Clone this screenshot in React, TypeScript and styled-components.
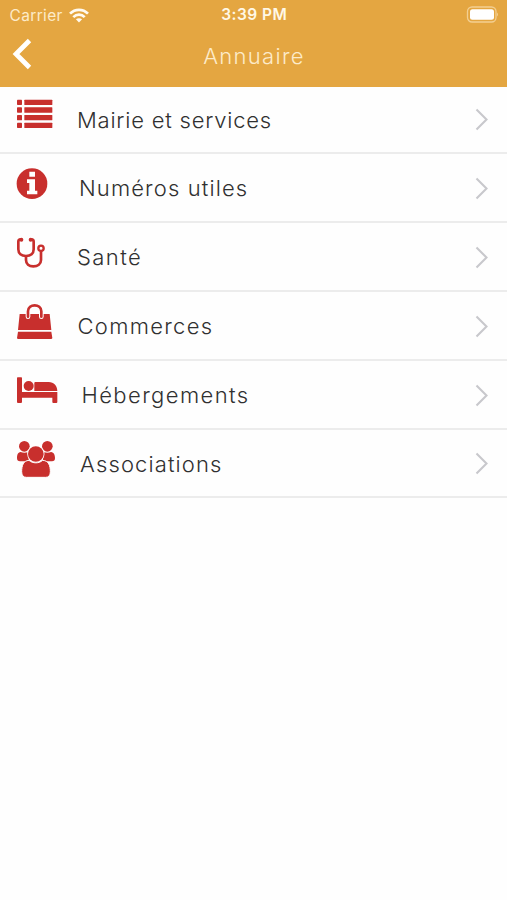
import React from "react";
import styled, { createGlobalStyle } from "styled-components";

const RED = "#c82f2d";

const GlobalStyle = createGlobalStyle`
  * { box-sizing: border-box; }
  body { margin: 0; background: #fff; font-family: Inter, "Open Sans", sans-serif; }
`;

const Screen = styled.main`
  width: 507px;
  height: 900px;
  overflow: hidden;
  background: #fefefe;
`;

const Header = styled.header`
  height: 87px;
  background: #e4a641;
  color: #fff8e6;
`;

const StatusBar = styled.div`
  display: grid;
  grid-template-columns: 1fr auto 1fr;
  align-items: center;
  height: 29px;
  padding: 0 8px 0 9.5px;
`;

const Carrier = styled.div`
  display: flex;
  align-items: center;
  gap: 6px;
  font-size: 15.5px;
  letter-spacing: 0.35px;
  line-height: 29px;
  color: #fdebc9;
`;

const Clock = styled.div`
  font-size: 15.5px;
  font-weight: 600;
  letter-spacing: 0.45px;
  line-height: 30px;
`;

const BatterySlot = styled.div`
  display: flex;
  justify-content: flex-end;
  height: 17px;
  margin-bottom: 1px;
`;

const NavBar = styled.nav`
  display: grid;
  grid-template-columns: 60px 1fr 60px;
  height: 58px;
`;

const BackButton = styled.button`
  display: block;
  height: 50px;
  padding: 0 0 0 12px;
  border: 0;
  background: none;
  text-align: left;
  svg { display: block; }
`;

const Title = styled.h1`
  margin: 0;
  text-align: center;
  font-size: 22px;
  font-weight: 300;
  letter-spacing: 1.3px;
  line-height: 55px;
  text-indent: 1px;
  color: #fdebc9;
`;

const List = styled.ul`
  margin: 0;
  padding: 0;
  list-style: none;
`;

const Row = styled.li<{ $height: number }>`
  display: flex;
  height: ${(p) => p.$height}px;
  padding-right: 18px;
  border-bottom: 2px solid #ececec;
  align-items: flex-end;
`;

const RowIcon = styled.svg`
  flex: none;
  align-self: flex-start;
  width: 60px;
  height: 66px;
`;

const Label = styled.span<{ $indent: number; $tracking: number; $line: number }>`
  flex: 1;
  margin-left: ${(p) => p.$indent}px;
  font-size: 22px;
  font-weight: 300;
  letter-spacing: ${(p) => p.$tracking}px;
  line-height: ${(p) => p.$line}px;
  color: #303030;
  white-space: nowrap;
`;

const Chevron = styled.svg`
  flex: none;
  width: 14px;
  height: 65px;
`;

const ListIcon = () => (
  <g fill={RED}>
    {[44, 67, 90, 113].map((y) => (
      <React.Fragment key={y}>
        <rect x="51" y={y} width="15" height="16" rx="2" />
        <rect x="73" y={y} width="84" height="16" rx="1.5" />
      </React.Fragment>
    ))}
  </g>
);

const InfoIcon = () => (
  <>
    <circle cx="96" cy="86" r="46" fill={RED} />
    <path fill="#fff" d="M88 50h17v15H88zM81 73h24v34h7v11H81v-11h7V84h-7z" />
  </>
);

const StethoscopeIcon = () => (
  <g fill="none" stroke={RED} strokeWidth="8" strokeLinecap="round" strokeLinejoin="round">
    <path d="M62 46Q55 46 55 53V76C55 88 64 96 78 96S101 88 101 76V53Q101 46 94 46" />
    <path d="M78 97V108C78 120 87 127 100 127S123 120 123 108V83" />
    <circle cx="123" cy="73" r="8" strokeWidth="7" />
    <path d="M64 47h.1M92 47h.1" strokeWidth="12" />
  </g>
);

const BagIcon = () => (
  <>
    <path fill={RED} d="M59 66H149L154 114H54ZM54 119H154L157 138Q157 141 153 141H55Q51 141 51 138Z" />
    <path d="M84 74V58C84 34 124 34 124 58V74" fill="none" stroke="#fff" strokeWidth="14" strokeLinecap="round" />
    <path d="M84 74V58C84 34 124 34 124 58V74" fill="none" stroke={RED} strokeWidth="8" strokeLinecap="round" />
  </>
);

const BedIcon = () => (
  <g fill={RED}>
    <path d="M53 49H64Q66 49 66 52V93H172V123Q172 126 169 126H160Q157 126 157 123V110H66V123Q66 126 63 126H54Q51 126 51 123V52Q51 49 53 49Z" />
    <circle cx="86" cy="75" r="15" />
    <path d="M106 63H146C162 64 171 73 172 90H103V66Q103 63 106 63Z" />
  </g>
);

const UsersIcon = () => (
  <g fill={RED}>
    <circle cx="73" cy="49" r="16" />
    <circle cx="142" cy="49" r="16" />
    <path d="M62 66C68 69 76 69 83 67L87 94H60Q51 94 51 84C51 76 53 67 62 66Z" />
    <path d="M153 66C147 69 139 69 132 67L128 94H156Q165 94 165 84C165 76 162 67 153 66Z" />
    <circle cx="107.5" cy="72" r="26" fill="#fff" />
    <path stroke="#fff" strokeWidth="3" d="M87 91C98 101 117 101 128 91C146 92 151 107 151 125Q151 142 137 142H79Q65 142 65 125C65 107 70 92 87 91Z" />
    <circle cx="107.5" cy="72" r="23.5" />
  </g>
);

const rows = [
  { label: "Mairie et services", height: 67, indent: 17, tracking: 0.78, line: 64, top: 6, Icon: ListIcon },
  { label: "Numéros utiles", height: 69, indent: 19, tracking: 1.12, line: 66, top: -3, Icon: InfoIcon },
  { label: "Santé", height: 69, indent: 17, tracking: 1.4, line: 66, top: -3, Icon: StethoscopeIcon },
  { label: "Commerces", height: 69, indent: 17.5, tracking: 1.3, line: 66, top: 0, Icon: BagIcon },
  { label: "Hébergements", height: 69, indent: 21.5, tracking: 1.4, line: 66, top: 0, Icon: BedIcon },
  { label: "Associations", height: 68, indent: 20, tracking: 1.12, line: 64, top: 0, Icon: UsersIcon },
];

export default function App() {
  return (
    <>
      <GlobalStyle />
      <Screen>
        <Header>
          <StatusBar>
            <Carrier>
              Carrier
              <svg width="20" height="15" viewBox="0 0 20 15" fill="none" stroke="#fffaf0" strokeWidth="2.7">
                <path d="M1 5.6C6 .5 14 .5 19 5.6M4.3 9.1C7.6 5.8 12.4 5.8 15.7 9.1" />
                <path d="M10 14.4 6.9 11.3C8.7 9.8 11.3 9.8 13.1 11.3Z" fill="#fffaf0" stroke="none" />
              </svg>
            </Carrier>
            <Clock>3:39 PM</Clock>
            <BatterySlot>
              <svg width="33" height="17" viewBox="0 0 33 17">
                <rect x="1.5" y="1" width="28.5" height="15" rx="4.5" fill="none" stroke="#f3cf91" strokeWidth="1.3" />
                <rect x="4" y="3.2" width="24" height="10.6" rx="2.5" fill="#fff" />
                <path d="M31 6.5Q33 8.5 31 10.5Z" fill="#f3cf91" />
              </svg>
            </BatterySlot>
          </StatusBar>
          <NavBar>
            <BackButton aria-label="Retour">
              <svg width="20" height="32" viewBox="0 0 20 32" fill="none" stroke="#fff" strokeWidth="4.8">
                <path d="M17.5 2.5 4 16 17.5 29.5" />
              </svg>
            </BackButton>
            <Title>Annuaire</Title>
          </NavBar>
        </Header>
        <List>
          {rows.map(({ label, height, indent, tracking, line, top, Icon }) => (
            <Row key={label} $height={height}>
              <RowIcon viewBox={`0 ${top} 180 198`}>
                <Icon />
              </RowIcon>
              <Label $indent={indent} $tracking={tracking} $line={line}>{label}</Label>
              <Chevron viewBox="0 0 14 65" fill="none" stroke="#c8c8cc" strokeWidth="2.1">
                <path d="M1.5 22.5 11.5 32.5 1.5 42.5" />
              </Chevron>
            </Row>
          ))}
        </List>
      </Screen>
    </>
  );
}
